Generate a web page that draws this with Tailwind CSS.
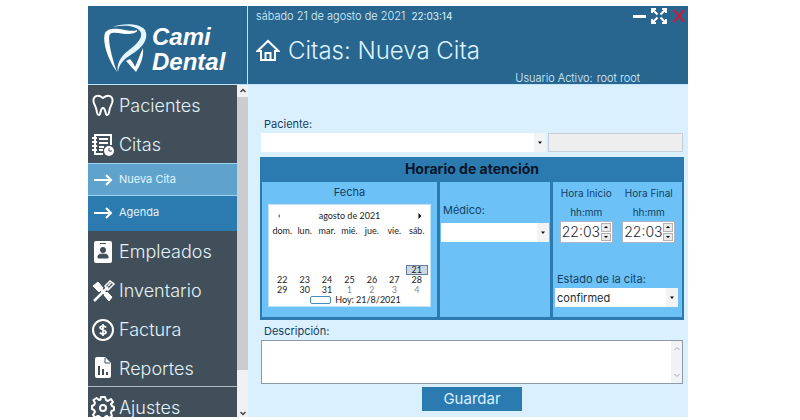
<!DOCTYPE html>
<html lang="es">
<head>
<meta charset="utf-8">
<meta name="viewport" content="width=device-width, initial-scale=1">
<title>Cami Dental - Nueva Cita</title>
<script src="https://cdn.jsdelivr.net/npm/@tailwindcss/browser@4"></script>
</head>
<body class="bg-white font-['Century_Gothic','Inter',sans-serif] text-[#14405f]">
<div class="flex h-screen flex-col pt-1.5 pr-[14%] pb-[3px] pl-[11%]">

  <header class="flex h-[79px] shrink-0 border-b border-[#bfe3f8] bg-[#28668f] text-[#dcf3ff]">
    <div class="flex w-40 shrink-0 items-center gap-1 border-r border-[#bfe3f8] pt-2 pl-4">
      <svg class="h-[50px] w-[44px] shrink-0" viewBox="0 0 44 50" aria-hidden="true">
        <path d="M13 48C4 36-2 18 1 9C3 5 9 4 15 5C22 6 29 8 33 6C34 8 30 10 25 10C18 10 9 7 6 10C3 15 8 34 13 48Z" fill="#fff"/>
        <path d="M9 3C18-1 36-1 41 6C46 16 36 25 28 30C20 35 15 40 14 48C12 40 17 32 25 26C33 20 40 13 36 7C31 1 19 1 9 3Z" fill="#e4f6ff"/>
        <path d="M22 37L26 35C28 37 30 40 31 43C34 37 36 30 39 24C40 33 36 42 32 48C29 45 26 41 22 37Z" fill="#fff"/>
      </svg>
      <div class="flex flex-col gap-px font-['Liberation_Sans',sans-serif] text-[24px] leading-6 font-bold text-white italic"><span>Cami</span><span>Dental</span></div>
    </div>
    <div class="flex min-w-0 grow flex-col pl-2">
      <div class="flex h-5 items-center justify-between">
        <div class="flex items-center gap-1.5 text-[10px] leading-4"><span class="text-[11px] font-light">sábado 21 de agosto de 2021</span><span>22:03:14</span></div>
        <div class="flex items-center gap-1 pr-px">
          <button aria-label="Minimizar"><svg class="size-4" viewBox="0 0 16 16"><path d="M2 8.500H15" stroke="#fff" stroke-width="3"/></svg></button>
          <button aria-label="Maximizar"><svg class="size-4" viewBox="0 0 16 16" fill="none" stroke="#fff" stroke-width="2"><path d="M1 5V1H5M11 1H15V5M15 11V15H11M5 15H1V11M1 1L6.500 6.500M15 1L9.500 6.500M15 15L9.500 9.500M1 15L6.500 9.500"/></svg></button>
          <button aria-label="Cerrar"><svg class="size-4" viewBox="0 0 16 16"><path d="M3 2L13 14M13 2L3 14" stroke="#c51f38" stroke-width="2"/></svg></button>
        </div>
      </div>
      <div class="flex h-[50px] items-center gap-2">
        <svg class="size-6 shrink-0" viewBox="0 0 24 24" fill="none" stroke="#fff" stroke-width="2"><path d="M1.500 12L12 2L22.500 12H19V21H5V12ZM9.500 21V14H14.500V21"/></svg>
        <h1 class="text-[24px] leading-8 font-light whitespace-nowrap">Citas: Nueva Cita</h1>
      </div>
      <div class="-mt-1 flex justify-end gap-1 pr-12 text-[11px] leading-3 font-light"><span>Usuario Activo:</span><span>root root</span></div>
    </div>
  </header>

  <div class="flex min-h-0 grow">
    <div class="flex w-40 shrink-0 overflow-hidden bg-[#414f5a]">
      <nav class="flex min-w-0 grow flex-col text-[18px] font-light text-[#e2f3fb]">
        <a href="#" class="flex h-[39px] shrink-0 items-center gap-1 pt-0.5 pl-[3px]">
          <svg class="size-6" viewBox="0 0 24 24" fill="none" stroke="#fff" stroke-width="2" stroke-linejoin="round"><path d="M12 4C8 1 4 1 2.500 5C1.500 9 5 12 5.500 16C6 20 7 21 8 21C10 21 9 14 12 14C15 14 14 21 16 21C17 21 18 20 18.500 16C19 12 22.500 9 21.500 5C20 1 16 1 12 4Z"/></svg>Pacientes</a>
        <a href="#" class="flex h-[39px] shrink-0 items-center gap-1 pt-0.5 pl-[3px]">
          <svg class="size-6" viewBox="0 0 24 24" fill="none" stroke="#fff" stroke-width="2"><path d="M12 21H4V2H20V12M8 6H17M8 10H17M8 14H13M8 17H12M1 5H6M1 9H6M1 13H6M1 17H6"/><circle cx="18" cy="18" r="5" fill="#fff" stroke="none"/><path d="M18 15V18H21" stroke="#414f5a" stroke-width="1"/></svg>Citas</a>
        <a href="#" class="flex h-[33px] shrink-0 items-center gap-1.5 border-y border-[#9bd5f5] bg-[#5fa3cd] pl-1.5 text-[11px] font-normal text-[#e2f6ff]">
          <svg class="h-3 w-[19px]" viewBox="0 0 19 12" fill="none" stroke="#fff" stroke-width="2"><path d="M0 6H17M12 1L17 6L12 11"/></svg>Nueva Cita</a>
        <a href="#" class="flex h-[35px] shrink-0 items-center gap-1.5 bg-[#2b7bb0] pb-0.5 pl-1.5 text-[11px] font-normal">
          <svg class="h-3 w-[19px]" viewBox="0 0 19 12" fill="none" stroke="#fff" stroke-width="2"><path d="M0 6H17M12 1L17 6L12 11"/></svg>Agenda</a>
        <a href="#" class="flex h-[39px] shrink-0 items-center gap-1 pt-0.5 pl-[3px]">
          <svg class="size-6" viewBox="0 0 24 24"><rect x="3" y="1" width="18" height="22" rx="2" fill="#fff"/><path d="M9 3.500H15M7 18V16Q7 14 12 14Q17 14 17 16V18Z" fill="#414f5a" stroke="#414f5a"/><circle cx="12" cy="10" r="3" fill="#414f5a"/></svg>Empleados</a>
        <a href="#" class="flex h-[39px] shrink-0 items-center gap-1 pt-0.5 pl-[3px]">
          <svg class="size-6" viewBox="0 0 24 24" fill="none" stroke="#fff"><path d="M2 7L7 3L12 9L8 13ZM13 16L16 13L21 18L18 22Z" fill="#fff"/><path d="M8 8L19 20" stroke-width="3"/><path d="M3 22L17 8" stroke-width="2.500"/><path d="M14 7L19 2L23 5L17 11ZM17 7L20 4" stroke-width="1.500"/></svg>Inventario</a>
        <a href="#" class="flex h-[39px] shrink-0 items-center gap-1 pt-0.5 pl-[3px]">
          <svg class="size-6" viewBox="0 0 24 24" fill="none" stroke="#fff" stroke-width="2"><circle cx="12" cy="12" r="10"/><path d="M15 9.500C14 7.500 9 7.500 9 9.800C9 12 15 11.500 15 14.300C15 16.500 10 16.500 9 14.500M12 6V18" stroke-width="1.700"/></svg>Factura</a>
        <a href="#" class="flex h-[39px] shrink-0 items-center gap-1 border-b border-[#a9bbc5] pt-0.5 pl-[3px]">
          <svg class="size-6" viewBox="0 0 24 24"><path d="M4 3Q4 1 6 1H14L20 7V20Q20 22 18 22H6Q4 22 4 20Z" fill="#fff"/><path d="M14 2V7H19" fill="none" stroke="#414f5a"/><path d="M8 10V19M12 13V19M16 16V19" stroke="#414f5a" stroke-width="2"/></svg>Reportes</a>
        <a href="#" class="flex h-[39px] shrink-0 items-center gap-1 pt-0.5 pl-[3px]">
          <svg class="size-6" viewBox="0 0 24 24" fill="none" stroke="#fff" stroke-width="2" stroke-linejoin="round"><path d="M10 1H14L15 4L17 5L20 3L22 6L20 8L21 10L23 11V14L20.500 15L20 17L21 20L18 22L16 20L14 21L13 23H10L9 21L7 20L4 21.500L2 19L4 16L3 14L1 13V10L3 9L4 7L2.500 4L5.500 2L8 4L9.500 3.500Z"/><circle cx="12" cy="12" r="3"/></svg>Ajustes</a>
      </nav>
      <div class="flex w-[11px] shrink-0 flex-col items-center bg-[#f0f1f2]" aria-hidden="true">
        <svg class="h-3 w-2 shrink-0" viewBox="0 0 8 12" fill="none" stroke="#444" stroke-width="1.500"><path d="M1.500 7L4 4.500L6.500 7"/></svg>
        <div class="w-full grow-[7] bg-[#cbcccd]"></div>
        <div class="flex grow items-end"><svg class="h-2 w-2" viewBox="0 0 8 8" fill="none" stroke="#444" stroke-width="1.500"><path d="M1.500 3L4 5.500L6.500 3"/></svg></div>
      </div>
    </div>

    <form class="flex min-w-0 grow flex-col bg-[#dbf0ff] pr-1 pl-3 text-[11px] leading-4">
      <label for="paciente" class="mt-[31px] block pl-1">Paciente:</label>
      <div class="mt-px flex gap-0.5 pr-px">
        <div class="relative ml-px min-w-0 grow">
          <select id="paciente" class="block h-[19px] w-full appearance-none bg-white px-1 outline-none"><option></option></select>
          <svg class="pointer-events-none absolute top-0 right-0 h-[19px] w-3 bg-[#f1f3f5]" viewBox="0 0 12 19"><path d="M4 8.500H8L6 11Z" fill="#111"/></svg>
        </div>
        <input aria-label="Identificación del paciente" readonly class="h-[19px] w-[32%] border border-[#c5ced6] bg-[#efeeee] outline-none">
      </div>

      <fieldset class="mt-[5px] flex min-w-0 flex-col bg-[#2b7bb0] px-0.5 pb-[3px]">
        <div class="h-[25px] text-center text-[14px] leading-6 font-bold text-[#071527]">Horario de atención</div>
        <div class="grid h-[135px] grid-cols-[175fr_110fr_129fr] gap-[3px]">
          <section class="bg-[#6cc2f7] px-1.5 pt-0.5">
            <h2 class="text-center leading-4">Fecha</h2>
            <div class="mt-1 border border-[#c1e2f8] bg-white px-0.5 pb-px font-['Lato',sans-serif] text-[9px] leading-[10px] text-[#222]">
              <div class="flex h-[21px] items-center justify-between px-1">
                <button type="button" aria-label="Mes anterior"><svg class="size-2" viewBox="0 0 8 8"><path d="M5 2V6L3 4Z" fill="#777"/></svg></button>
                <span>agosto de 2021</span>
                <button type="button" aria-label="Mes siguiente"><svg class="size-2" viewBox="0 0 8 8"><path d="M2.500 1V7L5.500 4Z" fill="#111"/></svg></button>
              </div>
              <table class="w-full table-fixed border-collapse text-center">
                <thead><tr class="h-[39px] align-top"><th class="font-normal">dom.</th><th class="font-normal">lun.</th><th class="font-normal">mar.</th><th class="font-normal">mié.</th><th class="font-normal">jue.</th><th class="font-normal">vie.</th><th class="font-normal">sáb.</th></tr></thead>
                <tbody>
                  <tr><td></td><td></td><td></td><td></td><td></td><td></td><td class="bg-[#ccd7e4] outline outline-[#627f9d] -outline-offset-1">21</td></tr>
                  <tr><td>22</td><td>23</td><td>24</td><td>25</td><td>26</td><td>27</td><td>28</td></tr>
                  <tr><td>29</td><td>30</td><td>31</td><td class="text-[#888]">1</td><td class="text-[#888]">2</td><td class="text-[#888]">3</td><td class="text-[#888]">4</td></tr>
                </tbody>
              </table>
              <div class="flex items-center justify-center gap-1 pl-3"><span class="h-2 w-[21px] rounded-xs border border-[#438db8]"></span>Hoy: 21/8/2021</div>
            </div>
          </section>

          <section class="bg-[#6cc2f7] px-px pt-5">
            <label for="medico" class="block pl-0.5">Médico:</label>
            <div class="relative mt-[5px]">
              <select id="medico" class="block h-[19px] w-full appearance-none bg-white px-1 outline-none"><option></option></select>
              <svg class="pointer-events-none absolute top-0 right-0 h-[19px] w-3 bg-[#f1f3f5]" viewBox="0 0 12 19"><path d="M4 8.500H8L6 11Z" fill="#111"/></svg>
            </div>
          </section>

          <section class="bg-[#6cc2f7] px-0.5 pt-[3px]">
            <div class="grid grid-cols-2 text-center text-[10px]">
              <label for="inicio" class="flex flex-col gap-[3px] whitespace-nowrap"><span>Hora Inicio</span><span>hh:mm</span></label>
              <label for="final" class="flex flex-col gap-[3px] whitespace-nowrap"><span>Hora Final</span><span>hh:mm</span></label>
            </div>
            <div class="mt-px grid grid-cols-2 justify-items-center">
              <div class="flex h-[22px] w-[53px] border border-[#a9b8c4] bg-white p-px">
                <input id="inicio" value="22:03" class="w-0 min-w-0 grow text-[14px] leading-4 font-light text-[#1b2838] outline-none">
                <div class="flex w-2.5 shrink-0 flex-col gap-px">
                  <button type="button" aria-label="Aumentar hora inicio" class="flex grow items-center justify-center border border-[#b3b3b3] bg-[#e9e9e9]"><svg class="size-1.5" viewBox="0 0 6 6"><path d="M1 4H5L3 2Z"/></svg></button>
                  <button type="button" aria-label="Reducir hora inicio" class="flex grow items-center justify-center border border-[#b3b3b3] bg-[#e9e9e9]"><svg class="size-1.5" viewBox="0 0 6 6"><path d="M1 2H5L3 4Z"/></svg></button>
                </div>
              </div>
              <div class="flex h-[22px] w-[53px] border border-[#a9b8c4] bg-white p-px">
                <input id="final" value="22:03" class="w-0 min-w-0 grow text-[14px] leading-4 font-light text-[#1b2838] outline-none">
                <div class="flex w-2.5 shrink-0 flex-col gap-px">
                  <button type="button" aria-label="Aumentar hora final" class="flex grow items-center justify-center border border-[#b3b3b3] bg-[#e9e9e9]"><svg class="size-1.5" viewBox="0 0 6 6"><path d="M1 4H5L3 2Z"/></svg></button>
                  <button type="button" aria-label="Reducir hora final" class="flex grow items-center justify-center border border-[#b3b3b3] bg-[#e9e9e9]"><svg class="size-1.5" viewBox="0 0 6 6"><path d="M1 2H5L3 4Z"/></svg></button>
                </div>
              </div>
            </div>
            <label for="estado" class="mt-7 block pl-0.5">Estado de la cita:</label>
            <div class="relative mr-0.5 mt-px">
              <select id="estado" class="block h-[19px] w-full appearance-none bg-white px-0.5 text-[#222c36] outline-none"><option>confirmed</option></select>
              <svg class="pointer-events-none absolute top-0 right-0 h-[19px] w-3 bg-[#f1f3f5]" viewBox="0 0 12 19"><path d="M4 8.500H8L6 11Z" fill="#111"/></svg>
            </div>
          </section>
        </div>
      </fieldset>

      <label for="descripcion" class="mt-[3px] block pl-1">Descripción:</label>
      <div class="mx-px mt-px flex h-11 border border-[#8d9aa5] bg-white">
        <textarea id="descripcion" class="min-w-0 grow resize-none p-1 outline-none"></textarea>
        <div class="flex w-[11px] shrink-0 flex-col items-center justify-between bg-[#f0f2f4] py-1" aria-hidden="true">
          <svg class="size-2" viewBox="0 0 8 8" fill="none" stroke="#aaa"><path d="M1.500 5L4 2.500L6.500 5"/></svg>
          <svg class="size-2" viewBox="0 0 8 8" fill="none" stroke="#aaa"><path d="M1.500 3L4 5.500L6.500 3"/></svg>
        </div>
      </div>
      <button type="submit" class="mt-[3px] h-6 w-[100px] self-center bg-[#2b7bb0] text-[15px] leading-5 text-[#d9f1ff]">Guardar</button>
    </form>
  </div>
</div>
</body>
</html>
